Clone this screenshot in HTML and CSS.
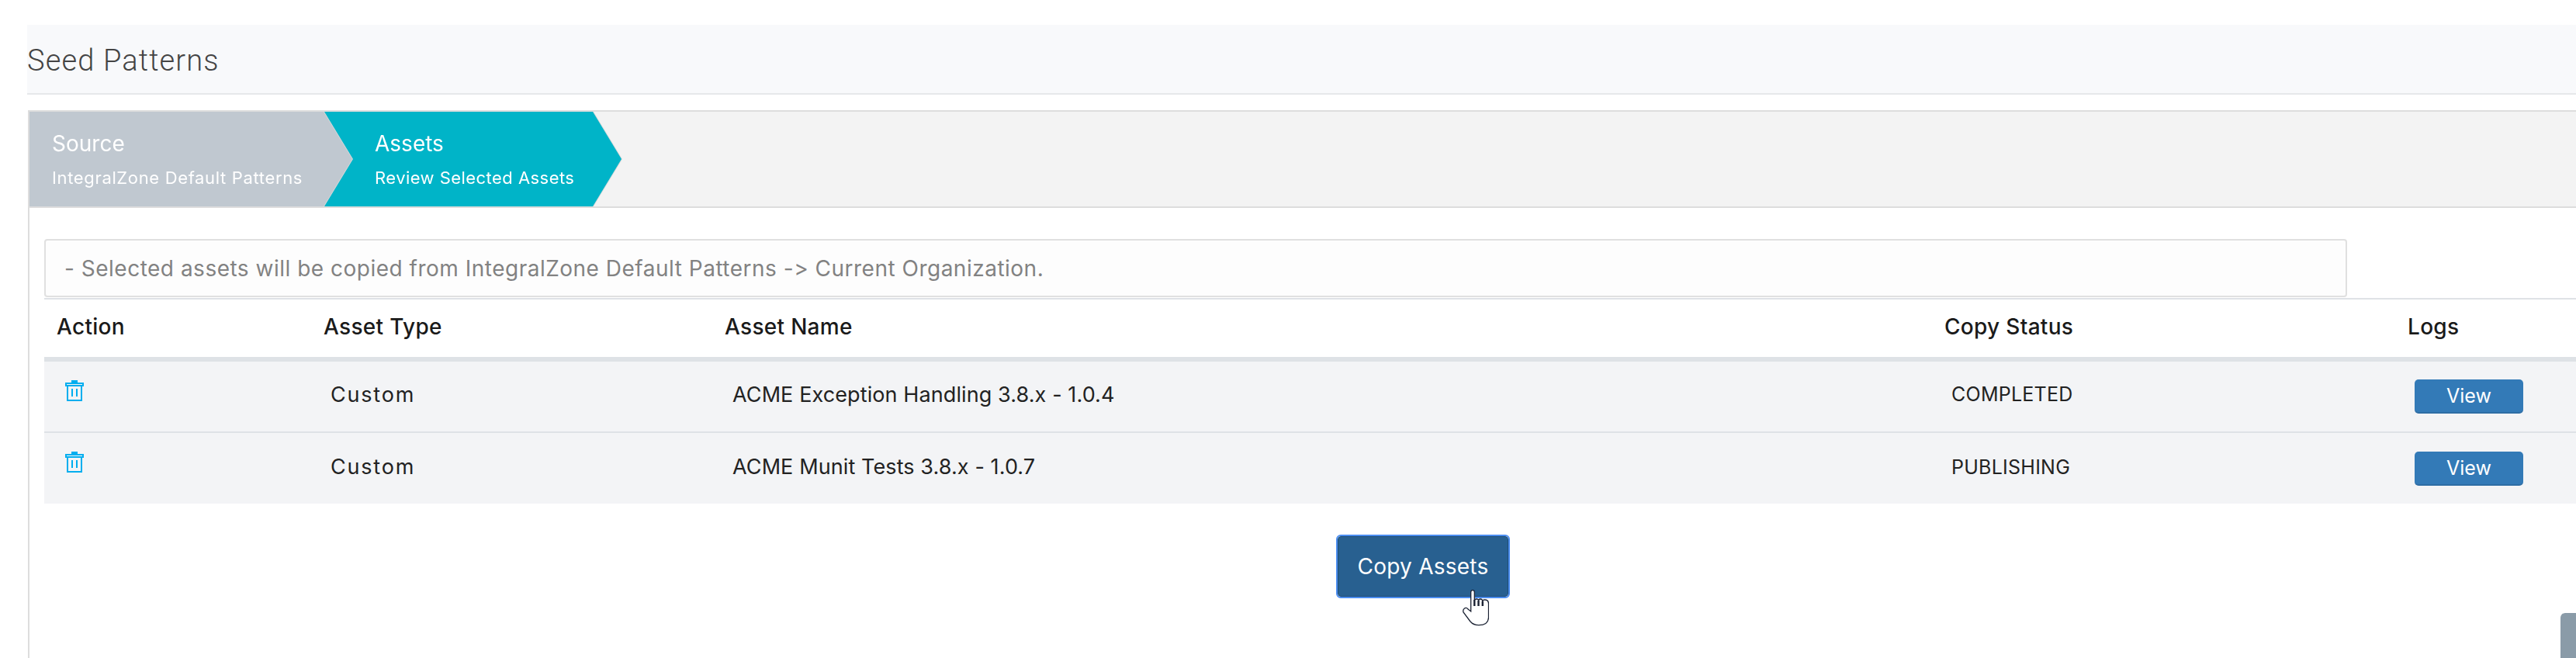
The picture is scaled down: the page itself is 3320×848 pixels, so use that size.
FILE: index.html
```html
<!DOCTYPE html>
<html lang="en">
<head>
<meta charset="utf-8">
<title>Seed Patterns</title>
<link rel="stylesheet" href="styles.css">
</head>
<body>
<div class="page">
  <header class="page-head"><h1 class="page-title">Seed Patterns</h1></header>
  <section class="card">
    <nav class="steps">
      <div class="step step-done">
        <div class="step-body">
          <div class="step-name">Source</div>
          <div class="step-sub">IntegralZone Default Patterns</div>
        </div>
      </div>
      <div class="step step-active">
        <div class="step-body">
          <div class="step-name">Assets</div>
          <div class="step-sub">Review Selected Assets</div>
        </div>
      </div>
    </nav>
    <div class="content">
      <div class="notice">- Selected assets will be copied from IntegralZone Default Patterns -&gt; Current Organization.</div>
      <table class="assets">
        <colgroup>
          <col class="col-action"><col class="col-type"><col class="col-name"><col class="col-status"><col class="col-logs">
        </colgroup>
        <thead>
          <tr><th>Action</th><th>Asset Type</th><th>Asset Name</th><th>Copy Status</th><th>Logs</th></tr>
        </thead>
        <tbody>
          <tr>
            <td class="cell-action">
              <svg class="trash" viewBox="0 0 24 27" aria-hidden="true"><path class="trash-fill" d="M8 0h8v3H8z"/><path class="trash-line" d="M1 4h22v3H1zM3 7v19h18V7M9 11v10M15 11v10"/></svg>
            </td>
            <td class="type">Custom</td><td class="name">ACME Exception Handling 3.8.x - 1.0.4</td><td class="status">COMPLETED</td>
            <td><button class="view-btn" type="button">View</button></td>
          </tr>
          <tr>
            <td class="cell-action">
              <svg class="trash" viewBox="0 0 24 27" aria-hidden="true"><path class="trash-fill" d="M8 0h8v3H8z"/><path class="trash-line" d="M1 4h22v3H1zM3 7v19h18V7M9 11v10M15 11v10"/></svg>
            </td>
            <td class="type">Custom</td><td class="name">ACME Munit Tests 3.8.x - 1.0.7</td><td class="status">PUBLISHING</td>
            <td><button class="view-btn" type="button">View</button></td>
          </tr>
        </tbody>
      </table>
      <div class="actions">
        <button class="copy-btn" type="button">Copy Assets
          <svg class="hand" viewBox="0 0 34 47" aria-hidden="true">
            <path class="hand-shape" d="M10.7 28V3Q10.7.7 13 .7T15.3 3V14Q15.3 12 18 12T20.5 14.5Q20.5 12 23 12T25.8 15Q25.8 13 28.5 13 33.5 13 33.5 18V36Q33 45.7 21 45.7 14 45.7 10 41L1 29Q0 26 2.5 24 5 22.5 7 25Z"/>
            <path class="hand-gap" d="M15.3 13V21M20.5 14V21M25.8 15V21"/>
          </svg>
        </button>
      </div>
    </div>
  </section>
</div>
<div class="scroll-thumb"></div>
</body>
</html>
```
FILE: styles.css
```css
* { box-sizing: border-box; }
html, body { margin: 0; height: 100%; overflow: hidden; background: #fff; }
body {
  font-family: Inter, "Liberation Sans", sans-serif;
  font-variant-ligatures: none;
  color: #212529;
}

.page { padding: 32px 0 0 35px; }

.page-head {
  display: flex;
  align-items: center;
  height: 90px;
  padding-top: 4px;
  background: #f8f9fb;
  border-bottom: 2px solid #e6e8ea;
}
.page-title {
  margin: 0;
  font-family: Roboto, sans-serif;
  font-weight: 300;
  font-size: 38px;
  letter-spacing: 1.15px;
  color: #444;
}

.card {
  margin: 20px 0 0 1px;
  border-left: 2px solid #ddd;
  height: 720px;
}

.steps {
  display: flex;
  height: 126px;
  background: #f3f3f3;
  border-top: 2px solid #ddd;
  border-bottom: 2px solid #ddd;
}
.step { filter: drop-shadow(1px 0 0 #d9d9d9); }
.step-body {
  height: 100%;
  display: flex;
  flex-direction: column;
  color: #fff;
}
.step-done { position: relative; z-index: 1; width: 416px; }
.step-done .step-body {
  background: #c0c8d0;
  padding: 19px 0 0 29px;
  clip-path: polygon(0 0, 379px 0, 100% 50%, 379px 100%, 0 100%);
}
.step-active { width: 384px; margin-left: -37px; }
.step-active .step-body {
  background: #00b4c8;
  padding: 19px 0 0 66px;
  clip-path: polygon(0 0, 347px 0, 100% 50%, 347px 100%, 0 100%);
}
.step-name { font-size: 28px; line-height: 44px; }
.step-sub { font-size: 22px; line-height: 44px; letter-spacing: 0.65px; white-space: nowrap; }
.step-active .step-sub { letter-spacing: 0.45px; }

.content { padding: 40px 0 0 19px; }

.notice {
  display: flex;
  align-items: center;
  width: 2968px;
  height: 75px;
  padding-left: 24px;
  background: #fdfdfd;
  border: 2px solid #e0e0e0;
  border-radius: 4px;
  color: #828282;
  font-size: 28px;
  letter-spacing: 0.5px;
}

.assets {
  width: 3263px;
  margin-top: 1px;
  table-layout: fixed;
  border-collapse: collapse;
  border-top: 2px solid #dfe2e6;
  font-size: 27px;
}
.col-action { width: 344px; }
.col-type { width: 517px; }
.col-name { width: 1572px; }
.col-status { width: 597px; }
.col-logs { width: 233px; }
.assets th {
  height: 78px;
  padding: 0 0 5px 16px;
  text-align: left;
  font-weight: 500;
  font-size: 28px;
  letter-spacing: 0.3px;
  color: #1a1a1a;
  border-bottom: 6px solid #dee2e6;
}
.assets td {
  height: 92px;
  padding: 0 0 4px 25px;
  background: #f3f4f6;
  color: #222;
  vertical-align: middle;
}
.assets tbody tr:first-child td { border-bottom: 2px solid #dee2e6; height: 94px; padding-bottom: 6px; }
.assets .cell-action,
.assets tbody tr:first-child .cell-action { padding: 24px 0 0 27px; vertical-align: top; }
.assets .type { letter-spacing: 1.8px; }
.assets .name { padding-left: 26px; letter-spacing: 0.1px; }
.assets .status { font-size: 25px; letter-spacing: 0.25px; }
.assets td:last-child,
.assets tbody tr:first-child td:last-child { padding-bottom: 0; }

.trash { display: block; width: 24px; height: 27px; }
.trash-fill { fill: #00aeef; }
.trash-line { fill: none; stroke: #00aeef; stroke-width: 2; }

.view-btn {
  width: 140px;
  height: 44px;
  padding: 0;
  background: #337ab7;
  border: 0;
  border-bottom: 2px solid #2e6da4;
  border-radius: 5px;
  color: #fff;
  font: inherit;
  font-size: 25px;
}

.actions { padding: 40px 0 0 1665px; }
.copy-btn {
  position: relative;
  width: 220px;
  height: 78px;
  margin: 2px;
  padding: 0;
  background: #286090;
  border: 1px solid #204d74;
  outline: 2px solid #4a8df0;
  border-radius: 4px;
  color: #fff;
  font: inherit;
  font-size: 28px;
  letter-spacing: 0.25px;
}
.hand { position: absolute; left: 160px; top: 68px; width: 34px; height: 47px; }
.hand-shape { fill: #fff; stroke: #1b2233; stroke-width: 1.3; }
.hand-gap { fill: none; stroke: #1b2233; stroke-width: 2.4; }

.scroll-thumb {
  position: absolute;
  right: 0;
  bottom: 0;
  width: 20px;
  height: 58px;
  background: #8a9ba8;
  border-top-left-radius: 6px;
}
```
